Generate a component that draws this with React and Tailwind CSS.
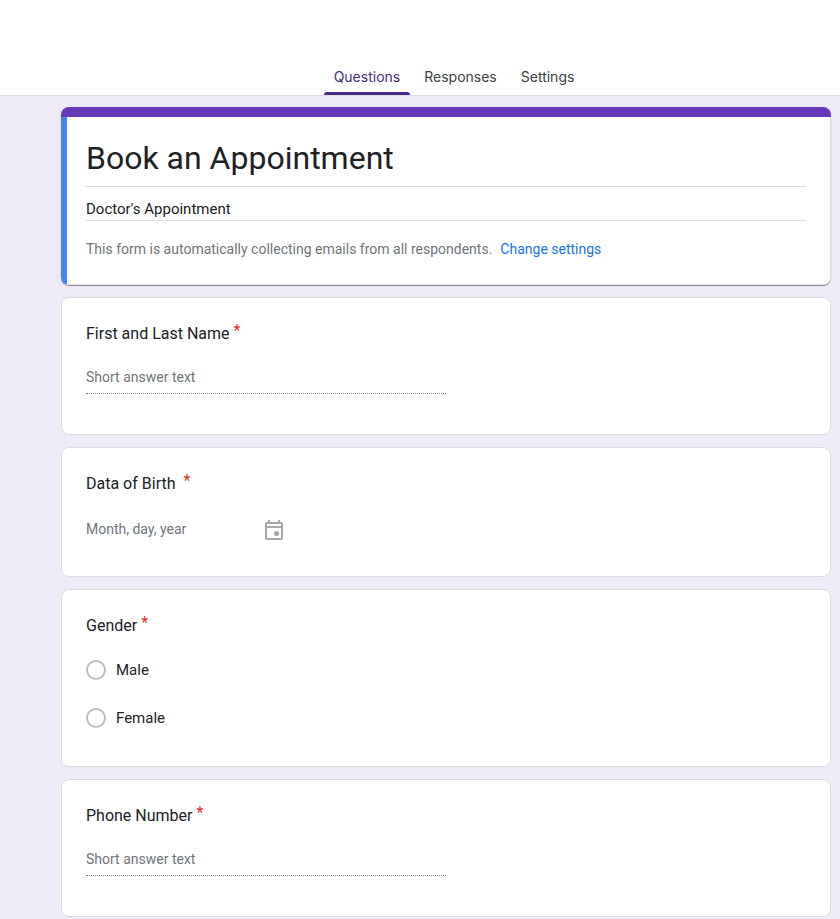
import React, { useState } from "react";

const TABS = ["Questions", "Responses", "Settings"];

const TabBar = ({ active, onSelect }) => (
  <header className="bg-white border-b border-[#dadce0] pt-[60px] pl-[68px]">
    <div role="tablist" className="flex justify-center gap-1">
      {TABS.map((tab) => {
        const isActive = tab === active;
        return (
          <button
            key={tab}
            type="button"
            role="tab"
            aria-selected={isActive}
            onClick={() => onSelect(tab)}
            className={`flex flex-col h-[35px] font-[Inter,sans-serif] text-sm cursor-pointer ${
              isActive ? "text-[#4b2a85]" : "text-[#3c4043]"
            }`}
          >
            <span className="flex-1 flex items-center px-2.5 pt-0.5">{tab}</span>
            <span
              className={`h-[3px] w-full rounded-t-[3px] ${
                isActive ? "bg-[#4b2a85]" : "bg-transparent"
              }`}
            />
          </button>
        );
      })}
    </div>
  </header>
);

const TitleCard = () => (
  <section className="rounded-lg overflow-hidden shadow-[0_1px_1px_rgba(0,0,0,0.4)]">
    <div className="h-2.5 bg-[#673ab7]" />
    <div className="bg-white rounded-br-lg border-l-[6px] border-l-[#4285f4] border-r border-b border-r-[#dadce0] border-b-[#dadce0] pt-[21px] pb-[25px] pl-[19px] pr-6">
      <input
        type="text"
        aria-label="Form title"
        defaultValue="Book an Appointment"
        className="block w-full h-[49px] pb-2 border-b border-[#dadce0] text-[32px] leading-10 text-[#202124] outline-none"
      />
      <input
        type="text"
        aria-label="Form description"
        defaultValue="Doctor's Appointment"
        className="block w-full h-[22px] pb-0.5 mt-3 border-b border-[#dadce0] text-[15px] leading-5 text-[#202124] outline-none"
      />
      <p className="mt-[18px] text-sm leading-5 text-[#70757a]">
        This form is automatically collecting emails from all respondents.
        <a href="#settings" className="ml-2 text-[#1a73e8]">
          Change settings
        </a>
      </p>
    </div>
  </section>
);

const Card = ({ children, className = "" }) => (
  <section
    className={`bg-white rounded-lg border border-[#dadce0] px-6 pt-6 ${className}`}
  >
    {children}
  </section>
);

const Star = () => <span className="text-[#d93025] leading-[18px]">*</span>;

const ShortAnswer = ({ id, label }) => (
  <Card className="pb-10">
    <label htmlFor={id} className="flex items-start gap-1 leading-6">
      {label}
      <Star />
    </label>
    <input
      id={id}
      type="text"
      placeholder="Short answer text"
      className="block w-1/2 h-[27px] mt-[21px] pb-1.5 border-b border-dotted border-[#80868b] text-sm leading-5 placeholder:text-[#70757a] outline-none"
    />
  </Card>
);

const CalendarIcon = () => (
  <svg viewBox="0 0 24 24" className="w-6 h-6 flex-shrink-0" aria-hidden="true">
    <rect x="4" y="5" width="16" height="16" rx="1" fill="none" stroke="#a5a7aa" strokeWidth="2" />
    <path d="M4 9h16M7 2v3M17 2v3" stroke="#a5a7aa" strokeWidth="2" />
    <circle cx="14.5" cy="15.5" r="2.5" fill="#a5a7aa" />
  </svg>
);

const DateQuestion = ({ id, label }) => (
  <Card className="pb-[34px]">
    <label htmlFor={id} className="flex items-start gap-2 leading-6">
      {label}
      <Star />
    </label>
    <div className="flex items-start w-[200px] mt-[22px]">
      <input
        id={id}
        type="text"
        placeholder="Month, day, year"
        className="flex-1 min-w-0 h-[22px] text-sm leading-5 placeholder:text-[#70757a] outline-none"
      />
      <CalendarIcon />
    </div>
  </Card>
);

const ChoiceQuestion = ({ name, label, options }) => (
  <Card className="pb-6">
    <fieldset>
      <legend className="flex items-start gap-1 mb-2 leading-6">
        {label}
        <Star />
      </legend>
      {options.map((option) => (
        <label key={option} className="flex items-center gap-2.5 h-12 text-[15px]">
          <input
            type="radio"
            name={name}
            value={option}
            className="appearance-none w-5 h-5 rounded-full border-2 border-[#bdbdbd] checked:border-[#673ab7] checked:border-[6px]"
          />
          {option}
        </label>
      ))}
    </fieldset>
  </Card>
);

const App = () => {
  const [activeTab, setActiveTab] = useState("Questions");

  return (
    <div className="min-h-screen bg-[#eeeaf7] font-[Roboto,sans-serif] text-base text-[#202124]">
      <TabBar active={activeTab} onSelect={setActiveTab} />
      <main className="flex flex-col gap-3 pt-[11px] pl-[61px] pr-[9px]">
        <TitleCard />
        <ShortAnswer id="full-name" label="First and Last Name" />
        <DateQuestion id="birth-date" label="Data of Birth" />
        <ChoiceQuestion name="gender" label="Gender" options={["Male", "Female"]} />
        <ShortAnswer id="phone" label="Phone Number" />
      </main>
    </div>
  );
};

export default App;
